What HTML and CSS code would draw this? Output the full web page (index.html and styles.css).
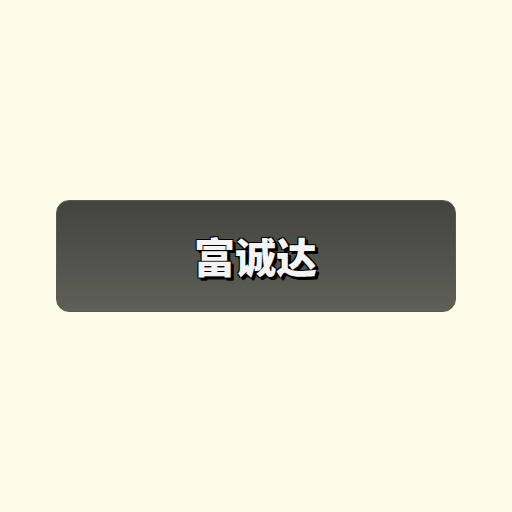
FILE: index.html
```html
<!DOCTYPE html>
<html lang="zh">
<head>
<meta charset="utf-8">
<link rel="stylesheet" href="styles.css">
</head>
<body>
<div class="page">
  <div class="btn"><span class="label">富诚达</span></div>
</div>
</body>
</html>
```
FILE: styles.css
```css
html, body {
  margin: 0;
  padding: 0;
  background: #fdfce8;
}
.page {
  width: 512px;
  height: 512px;
  display: flex;
  align-items: center;
  justify-content: center;
}
.btn {
  box-sizing: border-box;
  width: 400px;
  height: 112px;
  margin-left: -1px;
  margin-top: 0;
  border-radius: 13px;
  border: 1px solid #5a5a54;
  background: linear-gradient(to bottom, #43443f 0%, #5f5f58 100%);
  display: flex;
  align-items: center;
  justify-content: center;
}
.label {
  font-family: "Noto Sans CJK SC", sans-serif;
  font-weight: 900;
  font-size: 41px;
  line-height: 1;
  color: #f4f4f4;
  letter-spacing: 0;
  margin-top: -2px;
  text-shadow:
    -1px -1px 0 #000, 1px -1px 0 #000, -1px 1px 0 #000, 1px 1px 0 #000,
    2px 2px 0 #000, 3px 3px 0 #000, 2px 3px 0 #000, 3px 2px 0 #000;
}
```
